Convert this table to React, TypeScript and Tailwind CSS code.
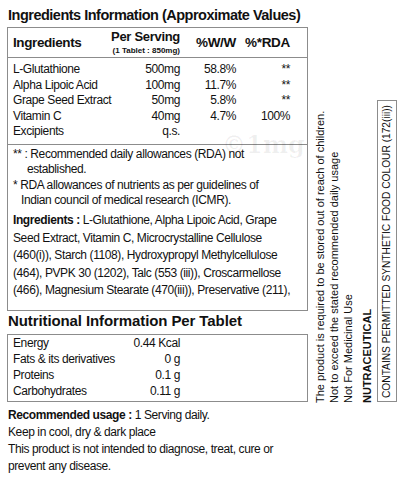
const ingredients = [
  { name: 'L-Glutathione', amount: '500mg', ww: '58.8%', rda: '**' },
  { name: 'Alpha Lipoic Acid', amount: '100mg', ww: '11.7%', rda: '**' },
  { name: 'Grape Seed Extract', amount: '50mg', ww: '5.8%', rda: '**' },
  { name: 'Vitamin C', amount: '40mg', ww: '4.7%', rda: '100%' },
  { name: 'Excipients', amount: 'q.s.', ww: '', rda: '' },
];

const nutrition = [
  { name: 'Energy', value: '0.44 Kcal' },
  { name: 'Fats & its derivatives', value: '0 g' },
  { name: 'Proteins', value: '0.1 g' },
  { name: 'Carbohydrates', value: '0.11 g' },
];

export default function App() {
  return (
    <div className="relative flex w-[406px] h-[480px] overflow-hidden bg-white text-[#111] font-['Liberation_Sans',Arial,sans-serif]">
      {/* Left: label panels */}
      <div className="w-[310px] shrink-0">
        <h1 className="mt-[5px] pl-[8px] text-[14.5px] leading-[20px] font-bold tracking-[-0.5px] whitespace-nowrap">
          Ingredients Information (Approximate Values)
        </h1>

        <div className="mt-[2px] ml-[7px] w-[301px] border border-[#8c8c8c]">
          {/* Header */}
          <div className="flex h-[30px] items-center pl-[5px] border-b border-[#8c8c8c] font-bold whitespace-nowrap">
            <div className="w-[107px] text-[13.5px] leading-[18px] tracking-[-0.4px]">Ingredients</div>
            <div className="w-[60px] flex flex-col items-end">
              <span className="text-[13px] leading-[16px] tracking-[-0.3px]">Per Serving</span>
              <span className="text-[8px] leading-[11px]">(1 Tablet : 850mg)</span>
            </div>
            <div className="w-[56px] text-right text-[13.5px] leading-[18px] tracking-[-0.3px]">%W/W</div>
            <div className="w-[54px] text-right text-[13.5px] leading-[18px] tracking-[-0.3px]">%*RDA</div>
          </div>

          {/* Rows */}
          <div className="pt-[4px] pb-[4px] border-b border-[#8c8c8c] text-[12px] leading-[15.5px] tracking-[-0.4px] whitespace-nowrap">
            {ingredients.map((r) => (
              <div key={r.name} className="flex pl-[5px]">
                <div className="w-[107px]">{r.name}</div>
                <div className="w-[60px] text-right">{r.amount}</div>
                <div className="w-[56px] text-right">{r.ww}</div>
                <div className="w-[54px] text-right">{r.rda}</div>
              </div>
            ))}
          </div>

          {/* Notes */}
          <div className="pt-[2px] pb-[10px] text-[12px] tracking-[-0.4px] whitespace-nowrap">
            <p className="pl-[19px] -indent-[14px] leading-[15px]">
              ** : Recommended daily allowances (RDA) not
              <br />
              established.
            </p>
            <p className="mt-[1px] pl-[13px] -indent-[8px] leading-[15px]">
              * RDA allowances of nutrients as per guidelines of
              <br />
              Indian council of medical research (ICMR).
            </p>
            <p className="mt-[4.5px] pl-[5px] leading-[17.5px]">
              <span className="font-bold">Ingredients :</span> L-Glutathione, Alpha Lipoic Acid, Grape
              <br />
              Seed Extract, Vitamin C, Microcrystalline Cellulose
              <br />
              (460(i)), Starch (1108), Hydroxypropyl Methylcellulose
              <br />
              (464), PVPK 30 (1202), Talc (553 (iii)), Croscarmellose
              <br />
              (466), Magnesium Stearate (470(iii)), Preservative (211),
            </p>
          </div>
        </div>

        <h2 className="pl-[8px] text-[15px] leading-[20px] font-bold tracking-[-0.1px] whitespace-nowrap">
          Nutritional Information Per Tablet
        </h2>

        <div className="mt-[3px] ml-[7px] w-[301px] border border-[#8c8c8c] pb-[2px] text-[12px] leading-[16px] tracking-[-0.4px] whitespace-nowrap">
          {nutrition.map((r) => (
            <div key={r.name} className="flex pl-[5px]">
              <div className="w-[107px]">{r.name}</div>
              <div className="w-[60px] text-right">{r.value}</div>
            </div>
          ))}
        </div>

        <div className="pl-[8px] text-[12px] tracking-[-0.4px] whitespace-nowrap">
          <p className="mt-[5px] leading-[17px]">
            <span className="font-bold">Recommended usage :</span> 1 Serving daily.
          </p>
          <p className="leading-[16px]">Keep in cool, dry &amp; dark place</p>
          <p className="mt-[1px] leading-[17px]">
            This product is not intended to diagnose, treat, cure or
            <br />
            prevent any disease.
          </p>
        </div>
      </div>

      {/* Watermark */}
      <div className="pointer-events-none absolute left-[222px] top-[131px] text-[24px] leading-[28px] font-bold text-black/[0.06] font-['DejaVu_Serif',serif]">
        ©1mg
      </div>

      {/* Right: vertical side text */}
      <div className="flex items-start">
        <div className="ml-[3px] mt-[3px] h-[400px] [writing-mode:vertical-rl] rotate-180 text-[11px] leading-[14px] whitespace-nowrap">
          <div>The product is required to be stored out of reach of children.</div>
          <div>Not to exceed the stated recommended daily usage</div>
          <div>Not For Medicinal Use</div>
          <div className="mr-[5px] font-bold">NUTRACEUTICAL</div>
        </div>
        <div className="ml-[3px] mt-[100px] w-[20px] h-[302px] pt-[3px] border border-[#8c8c8c] [writing-mode:vertical-rl] rotate-180 text-[10.2px] leading-[18px] whitespace-nowrap">
          CONTAINS PERMITTED SYNTHETIC FOOD COLOUR (172(iii))
        </div>
      </div>
    </div>
  );
}
